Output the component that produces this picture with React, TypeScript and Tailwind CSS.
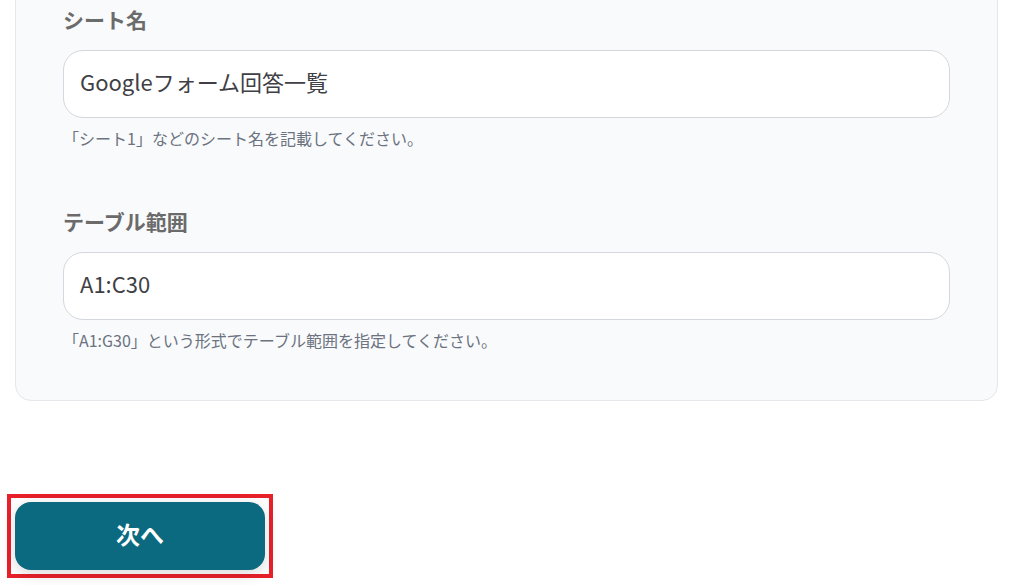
const fields = [
  {
    label: "シート名",
    value: "Googleフォーム回答一覧",
    help: "「シート1」などのシート名を記載してください。",
  },
  {
    label: "テーブル範囲",
    value: "A1:C30",
    help: "「A1:G30」という形式でテーブル範囲を指定してください。",
  },
];

const App = () => {
  return (
    <div
      className="w-[1013px] h-[585px] overflow-hidden bg-white"
      style={{ fontFamily: '"Noto Sans CJK JP", "Noto Sans", sans-serif' }}
    >
      <div className="px-[15px]">
        <div className="-mt-[40px] pt-[46px] pb-[50px] px-[47px] bg-[#f9fafb] border border-[#e5e7eb] rounded-2xl flex flex-col gap-[61px]">
          {fields.map((f) => (
            <div key={f.label}>
              <div className="text-[21px] leading-[24px] font-bold text-[#6b6b6b] mb-[19px]">
                {f.label}
              </div>
              <div className="h-[68px] bg-white border border-[#d4d7dd] rounded-[20px] flex items-center px-4 pb-[6px] text-[22px] text-[#3f3f46]">
                {f.value}
              </div>
              <div className="mt-[10px] text-[16px] leading-[20px] text-[#6b7280]">
                {f.help}
              </div>
            </div>
          ))}
        </div>
        <div className="mt-[93px] -ml-2 inline-block border-4 border-[#e8202a] p-1">
          <button className="block w-[250px] h-[68px] pb-1 rounded-2xl bg-[#0b6980] text-white text-[24px] font-bold shadow-[0_4px_16px_rgba(0,0,0,0.15)]">
            次へ
          </button>
        </div>
      </div>
    </div>
  );
};

export default App;
